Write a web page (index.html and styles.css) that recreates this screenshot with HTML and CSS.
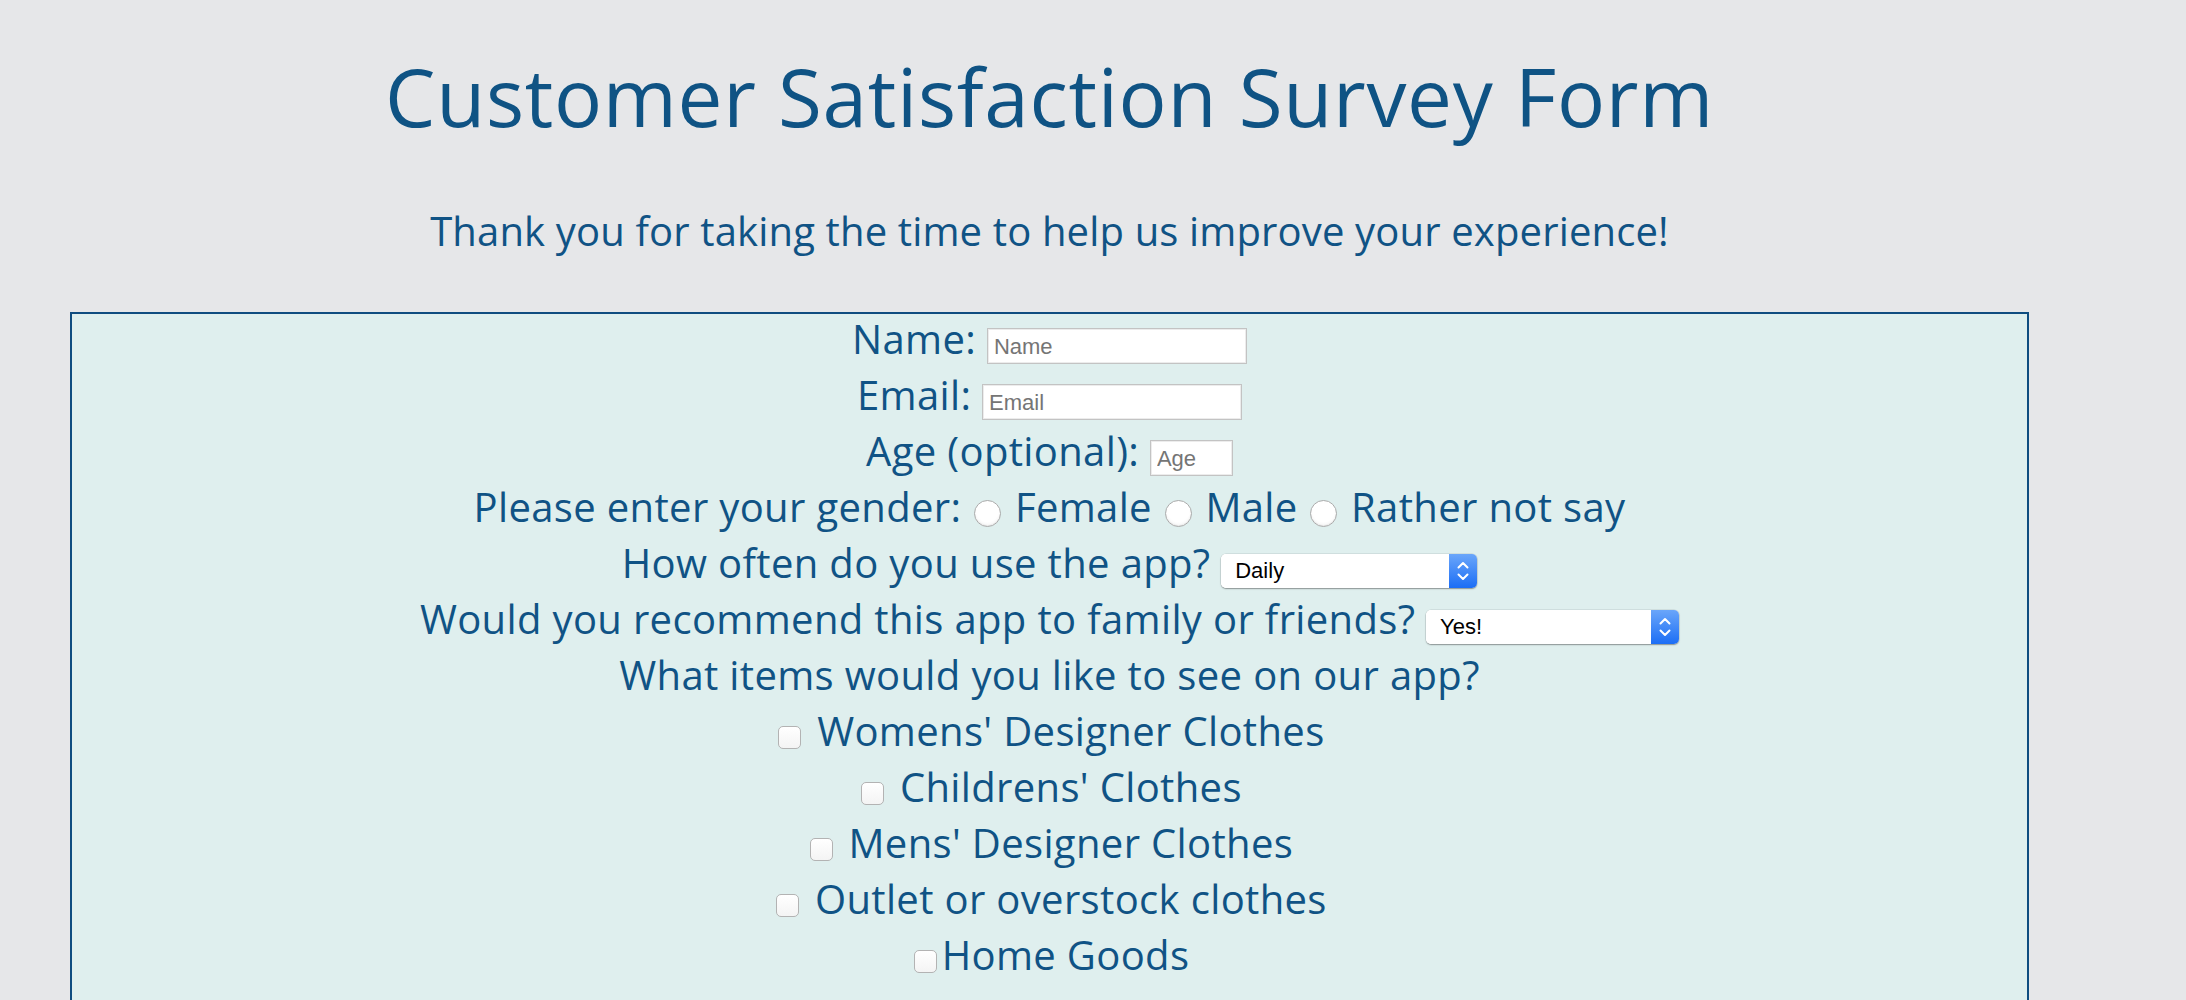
FILE: index.html
```html
<!DOCTYPE html>
<html lang="en">
<head>
<meta charset="utf-8">
<title>Customer Satisfaction Survey Form</title>
<link rel="stylesheet" href="styles.css">
</head>
<body>
<main class="page">
  <h1 class="title" id="title">Customer Satisfaction Survey Form</h1>
  <p class="lead" id="description">Thank you for taking the time to help us improve your experience!</p>
  <form class="survey" id="survey-form">
    <div class="row"><label for="name">Name:</label> <input class="field field-name" id="name" type="text" placeholder="Name"></div>
    <div class="row"><label for="email">Email:</label> <input class="field field-email" id="email" type="email" placeholder="Email"></div>
    <div class="row"><label for="age">Age (optional):</label> <input class="field field-age" id="age" type="number" placeholder="Age"></div>
    <div class="row">Please enter your gender: <input class="radio" type="radio" name="gender" id="female"><label for="female"> Female</label> <input class="radio" type="radio" name="gender" id="male"><label for="male"> Male</label> <input class="radio" type="radio" name="gender" id="none"><label for="none"> Rather not say</label></div>
    <div class="row"><label for="often">How often do you use the app?</label> <span class="select select-often"><select id="often"><option>Daily</option><option>Weekly</option><option>Monthly</option></select><span class="select-arrow"><svg width="28" height="34" viewBox="0 0 28 34"><polyline points="9.5,13.5 14,9 18.5,13.5" fill="none" stroke="#fff" stroke-width="2" stroke-linecap="round" stroke-linejoin="round"/><polyline points="9.5,20.5 14,25 18.5,20.5" fill="none" stroke="#fff" stroke-width="2" stroke-linecap="round" stroke-linejoin="round"/></svg></span></span></div>
    <div class="row"><label for="recommend">Would you recommend this app to family or friends?</label> <span class="select select-rec"><select id="recommend"><option>Yes!</option><option>Maybe</option><option>No</option></select><span class="select-arrow"><svg width="28" height="34" viewBox="0 0 28 34"><polyline points="9.5,13.5 14,9 18.5,13.5" fill="none" stroke="#fff" stroke-width="2" stroke-linecap="round" stroke-linejoin="round"/><polyline points="9.5,20.5 14,25 18.5,20.5" fill="none" stroke="#fff" stroke-width="2" stroke-linecap="round" stroke-linejoin="round"/></svg></span></span></div>
    <div class="row">What items would you like to see on our app?</div>
    <div class="row"><input class="check" type="checkbox" id="c1"><label for="c1"> Womens' Designer Clothes</label></div>
    <div class="row"><input class="check" type="checkbox" id="c2"><label for="c2"> Childrens' Clothes</label></div>
    <div class="row"><input class="check" type="checkbox" id="c3"><label for="c3"> Mens' Designer Clothes</label></div>
    <div class="row"><input class="check" type="checkbox" id="c4"><label for="c4"> Outlet or overstock clothes</label></div>
    <div class="row"><input class="check" type="checkbox" id="c5"><label for="c5">Home Goods</label></div>
  </form>
</main>
</body>
</html>
```
FILE: styles.css
```css
html, body {
  margin: 0;
  padding: 0;
  background: #e6e7e9;
}

body {
  font-family: "Open Sans", "Noto Sans", sans-serif;
  color: #105385;
}

.page {
  width: 1959px;
  margin-left: 70px;
  text-align: center;
}

.title {
  margin: 0;
  padding-top: 41px;
  font-size: 80px;
  font-weight: 400;
  line-height: 110px;
  letter-spacing: 0.7px;
  color: #0f5384;
}

.lead {
  margin: 52px 0 0;
  font-size: 40px;
  line-height: 56px;
  font-weight: 400;
  letter-spacing: 0.15px;
}

.survey {
  margin-top: 53px;
  background: #dfefee;
  border: 2px solid #0f4d80;
  padding: 0 0 40px;
  font-size: 40px;
  letter-spacing: 0.35px;
}

.row {
  line-height: 50px;
  padding-bottom: 6px;
  white-space: nowrap;
}

.field {
  box-sizing: border-box;
  height: 36px;
  padding: 3px 6px 0;
  border: 1px solid #c3c3c3;
  box-shadow: inset 0 0 0 1px #ececec;
  background: #fff;
  font-family: "Liberation Sans", Arial, sans-serif;
  font-size: 22px;
  letter-spacing: 0;
  color: #222;
  outline: none;
  border-radius: 0;
  -moz-appearance: textfield;
}

.field::placeholder {
  color: #757575;
}

.field::-webkit-outer-spin-button,
.field::-webkit-inner-spin-button {
  -webkit-appearance: none;
  margin: 0;
}

.field-name { width: 260px; }
.field-email { width: 260px; }
.field-age { width: 83px; }

.radio {
  -webkit-appearance: none;
  appearance: none;
  box-sizing: border-box;
  width: 27px;
  height: 27px;
  margin: 0 3px 0 2px;
  border: 1px solid #ababab;
  border-radius: 50%;
  background: radial-gradient(circle at 50% 40%, #ffffff 55%, #ececec 100%);
  box-shadow: inset 0 -1px 1px rgba(0, 0, 0, 0.06);
  vertical-align: -5px;
}

.check {
  -webkit-appearance: none;
  appearance: none;
  box-sizing: border-box;
  width: 23px;
  height: 23px;
  margin: 0 5px 0 4px;
  border: 1px solid #b3b3b3;
  border-radius: 5px;
  background: linear-gradient(#ffffff, #f4f4f4);
  vertical-align: -3px;
}

.select {
  display: inline-flex;
  height: 34px;
  border-radius: 5px;
  overflow: hidden;
  box-shadow: 0 1px 1.5px rgba(0, 0, 0, 0.35), 0 0 0 0.5px rgba(0, 0, 0, 0.12);
  background: #fff;
  vertical-align: baseline;
  letter-spacing: 0;
}

.select select {
  -webkit-appearance: none;
  appearance: none;
  box-sizing: border-box;
  height: 34px;
  border: 0;
  margin: 0;
  padding: 0 0 0 14px;
  background: #fff;
  font-family: "Liberation Sans", Arial, sans-serif;
  font-size: 22px;
  color: #000;
  outline: none;
}

.select-often select { width: 228px; }
.select-rec select { width: 225px; }

.select-arrow {
  display: block;
  width: 28px;
  height: 34px;
  background: linear-gradient(#6aa6fa, #1c6ef5);
}

.select-arrow svg {
  display: block;
}
```
